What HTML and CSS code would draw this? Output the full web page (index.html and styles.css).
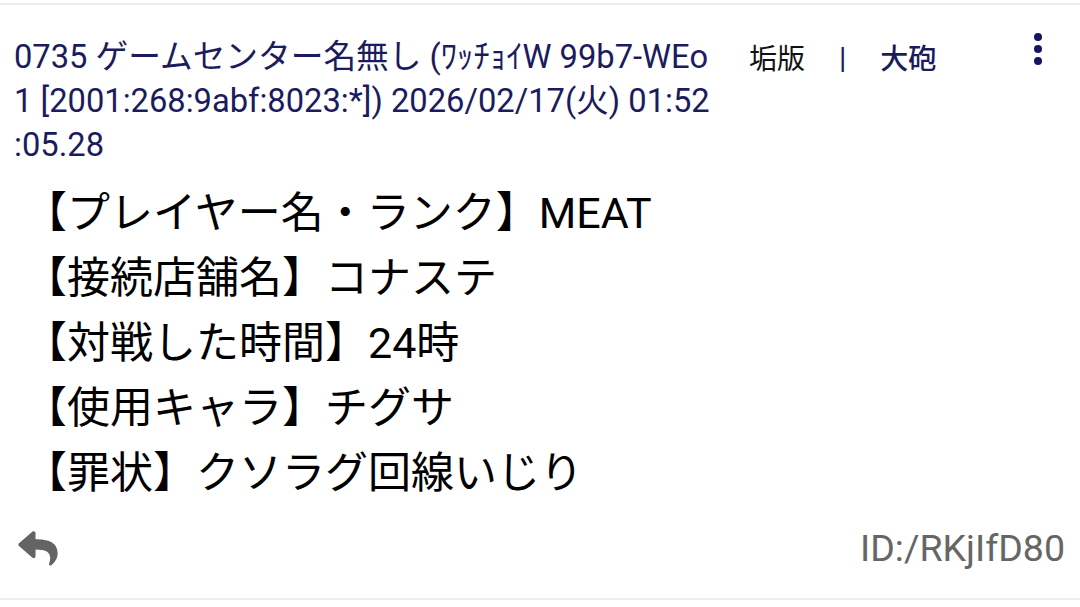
FILE: index.html
```html
<!DOCTYPE html>
<html lang="ja">
<head>
<meta charset="utf-8">
<link rel="stylesheet" href="styles.css">
</head>
<body>
<div class="rule"></div>
<article class="post">
  <header class="head">
    <div class="meta">
      <span class="ln">0735 ゲームセンター名無し (ﾜｯﾁｮｲW 99b7-WEo</span>
      <span class="ln">1 [2001:268:9abf:8023:*]) 2026/02/17(火) 01:52</span>
      <span class="ln">:05.28</span>
    </div>
    <div class="actions">
      <span class="act-black">垢版</span>
      <span class="sep">|</span>
      <span class="act-navy">大砲</span>
    </div>
    <div class="kebab"><span></span><span></span><span></span></div>
  </header>
  <div class="body">
    <p>【プレイヤー名・ランク】MEAT</p>
    <p>【接続店舗名】コナステ</p>
    <p>【対戦した時間】24時</p>
    <p>【使用キャラ】チグサ</p>
    <p>【罪状】クソラグ回線いじり</p>
  </div>
  <footer class="foot">
    <svg class="reply" viewBox="0 30 512 456" width="40" height="35" aria-hidden="true">
      <path d="M8.309 189.836L184.313 37.851C199.719 24.546 224 35.347 224 56.015v80.053c160.629 1.839 288 34.032 288 186.258 0 61.441-39.581 122.309-83.333 154.132-13.653 9.931-33.111-2.533-28.077-18.631 45.344-145.012-21.507-183.51-176.59-185.742V360c0 20.7-24.3 31.453-39.687 18.164l-176.004-152c-11.071-9.562-11.086-26.753 0-36.328z" fill="#646464"/>
    </svg>
    <span class="id">ID:/RKjIfD80</span>
  </footer>
</article>
<div class="rule bottom"></div>
</body>
</html>
```

FILE: styles.css
```css
html, body {
  margin: 0;
  padding: 0;
  background: #ffffff;
}

body {
  font-family: Roboto, "Noto Sans CJK JP", sans-serif;
  width: 1080px;
  height: 607px;
  overflow: hidden;
  padding-top: 3px;
  box-sizing: border-box;
}

.rule {
  height: 2px;
  background: #ededed;
}

.post {
  height: 593px;
  display: flex;
  flex-direction: column;
}

.head {
  display: flex;
  align-items: flex-start;
  padding: 30px 0 0 14px;
}

.meta {
  width: 701px;
  flex: none;
  font-size: 32.7px;
  line-height: 44px;
  color: #1b1b5e;
}

.ln {
  display: block;
  white-space: nowrap;
}

.actions {
  display: flex;
  align-items: center;
  gap: 34px;
  margin-left: 34px;
  height: 44px;
  font-size: 28px;
}

.act-black {
  color: #111111;
}

.sep {
  color: #1b1b5e;
  font-size: 30px;
}

.act-navy {
  color: #1b1b5e;
  font-weight: 500;
}

.kebab {
  margin-left: auto;
  margin-right: 38px;
  margin-top: -2px;
  display: flex;
  flex-direction: column;
  gap: 4px;
}

.kebab span {
  width: 8px;
  height: 8px;
  border-radius: 50%;
  background: #151565;
}

.body {
  padding: 14px 0 0 24px;
}

.body p {
  margin: 0;
  font-size: 43px;
  line-height: 65px;
  color: #000000;
}

.foot {
  margin-top: auto;
  display: flex;
  align-items: center;
  justify-content: space-between;
  padding: 0 15px 28px 18px;
}

.reply {
  display: block;
}

.id {
  font-size: 37.5px;
  color: #666666;
}
```
